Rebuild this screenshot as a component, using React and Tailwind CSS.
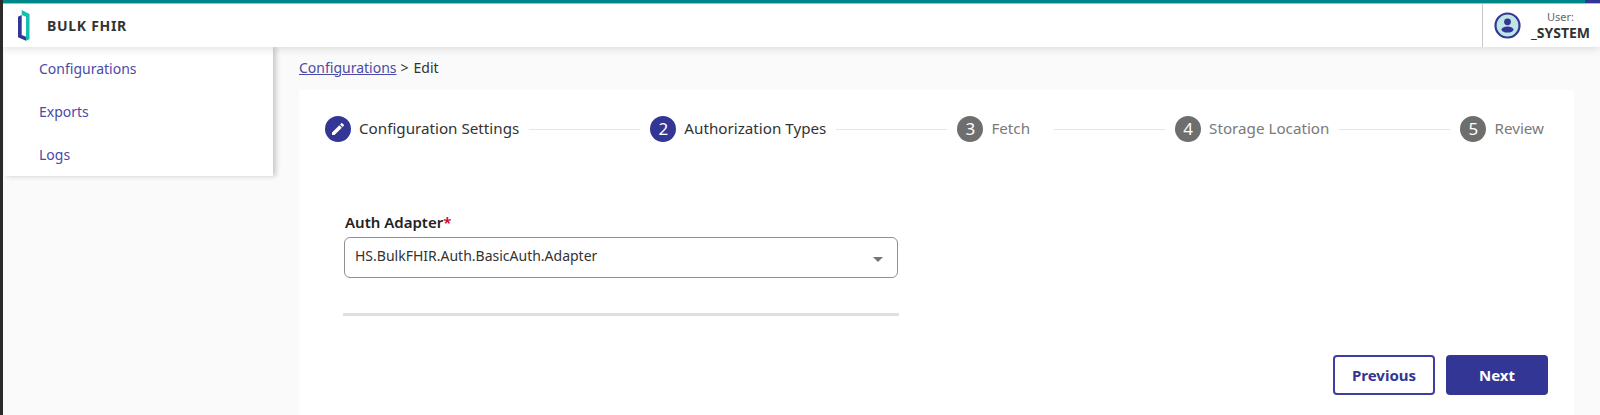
import React from "react";

const font = "font-['Noto_Sans',sans-serif]";

function Logo() {
  return (
    <svg width="12" height="31" viewBox="0 0 12 31" fill="none">
      <path d="M0 6.7 L3.7 5 V25 L8 26.7 V30.7 L0 27.3 Z" fill="#333694" />
      <path d="M3.7 0 L11.5 4 V29.3 L8 30.7 V6.7 L3.7 5 Z" fill="#14bfae" />
    </svg>
  );
}

function UserIcon() {
  return (
    <svg width="27" height="27" viewBox="0 0 27 27">
      <circle cx="13.5" cy="13.5" r="12" fill="#bfe4e4" stroke="#333694" strokeWidth="2.2" />
      <circle cx="13.5" cy="9.8" r="3.4" fill="#333694" />
      <ellipse cx="13.5" cy="17.6" rx="6" ry="3" fill="#333694" />
    </svg>
  );
}

function Step({ n, label, active, edit, extra }) {
  return (
    <div className={`flex items-center gap-2 shrink-0 ${extra ? "mr-[14px]" : ""}`}>
      <div className={`w-[26px] h-[26px] rounded-full flex items-center justify-center text-white text-[17px] ${active ? "bg-[#333694]" : "bg-[#6e6e6e]"}`}>
        {edit ? (
          <svg width="16" height="16" viewBox="0 0 24 24" fill="white">
            <path d="M3 17.25V21h3.75L17.81 9.94l-3.75-3.75L3 17.25zM20.71 7.04a1 1 0 0 0 0-1.41l-2.34-2.34a1 1 0 0 0-1.41 0l-1.83 1.83 3.75 3.75 1.83-1.83z" />
          </svg>
        ) : n}
      </div>
      <span className={`text-[15.2px] pb-[2px] ${active ? "text-[#333333]" : "text-[#7a7a7a]"}`}>{label}</span>
    </div>
  );
}

function Line() {
  return <div className="flex-1 h-px bg-[#e6e6e6] mx-[10px]" />;
}

export default function App() {
  return (
    <div className={`${font} h-[415px] w-[1600px] overflow-hidden flex flex-col bg-[#fafafa] border-l-[3px] border-[#2b2b2b]`}>
      <div className="h-[4px] shrink-0 flex border-b border-[#b9bbdc]">
        <div className="flex-1 bg-[#008a8a]" />
        <div className="w-[15px] bg-[#333694]" />
      </div>
      <header className="h-[43px] shrink-0 bg-white flex items-center justify-between pl-[15px] shadow-[0_2px_8px_rgba(0,0,0,0.12)] relative z-20">
        <div className="flex items-center gap-[17px]">
          <Logo />
          <span className="text-[14px] font-bold tracking-[0.7px] text-[#333333]">BULK FHIR</span>
        </div>
        <div className="flex items-center h-full border-l border-[#c8c8c8] w-[118px] pl-[11px] gap-[10px]">
          <UserIcon />
          <div className="flex flex-col items-end leading-none">
            <span className="text-[11px] text-[#666666] mr-[16px] leading-[14px]">User:</span>
            <span className="text-[14px] font-bold text-[#333333] leading-[18px]">_SYSTEM</span>
          </div>
        </div>
      </header>
      <div className="flex flex-1 min-h-0">
        <nav className="w-[269px] ml-[1px] h-[129px] shrink-0 bg-white shadow-[3px_0_5px_rgba(0,0,0,0.2)] flex flex-col pl-[35px] relative z-10">
          <a className="h-[43px] flex items-center text-[14px] text-[#4a4aa8]">Configurations</a>
          <a className="h-[43px] flex items-center text-[14px] text-[#4a4aa8]">Exports</a>
          <a className="h-[43px] flex items-center text-[14px] text-[#4a4aa8]">Logs</a>
        </nav>
        <main className="flex-1 min-w-0 pl-[26px] pr-[26px] flex flex-col">
          <div className="h-[43px] shrink-0 flex items-center text-[14px] text-[#333333] pb-[3px]">
            <a className="text-[#4a4aa8] underline">Configurations</a>
            <span className="ml-[4px]">&gt;</span>
            <span className="ml-[5px]">Edit</span>
          </div>
          <section className="flex-1 bg-white pl-[26px] pr-[30px] pt-[26px]">
            <div className="flex items-center h-[26px]">
              <Step edit active label="Configuration Settings" />
              <Line />
              <Step n="2" active label="Authorization Types" />
              <Line />
              <Step n="3" label="Fetch" extra />
              <Line />
              <Step n="4" label="Storage Location" />
              <Line />
              <Step n="5" label="Review" />
            </div>
            <div className="w-[556px] ml-[18px] mt-[69px]">
              <label className="block text-[15px] font-semibold text-[#222222] leading-[22px] ml-[2px]">
                Auth Adapter<span className="text-[#d0021b]">*</span>
              </label>
              <div className="mt-[4px] mx-[1px] h-[41px] border border-[#8f8f8f] rounded-[6px] flex items-center justify-between pl-[10px] pr-[14px] text-[14px] text-[#333333]">
                <span className="pb-[5px]">HS.BulkFHIR.Auth.BasicAuth.Adapter</span>
                <svg width="10" height="5" viewBox="0 0 10 5" className="mt-[4px]"><path d="M0 0h10L5 5z" fill="#757575" /></svg>
              </div>
              <div className="h-[3px] bg-[#e0e0e0] mt-[35px]" />
            </div>
            <div className="flex justify-end gap-[11px] mt-[39px] mr-[-4px]">
              <button className="w-[102px] h-[40px] rounded-[4px] border-2 border-[#3d40a0] bg-white text-[#333694] text-[15px] font-bold">Previous</button>
              <button className="w-[102px] h-[40px] rounded-[4px] bg-[#333694] text-white text-[15px] font-bold">Next</button>
            </div>
          </section>
        </main>
      </div>
    </div>
  );
}
